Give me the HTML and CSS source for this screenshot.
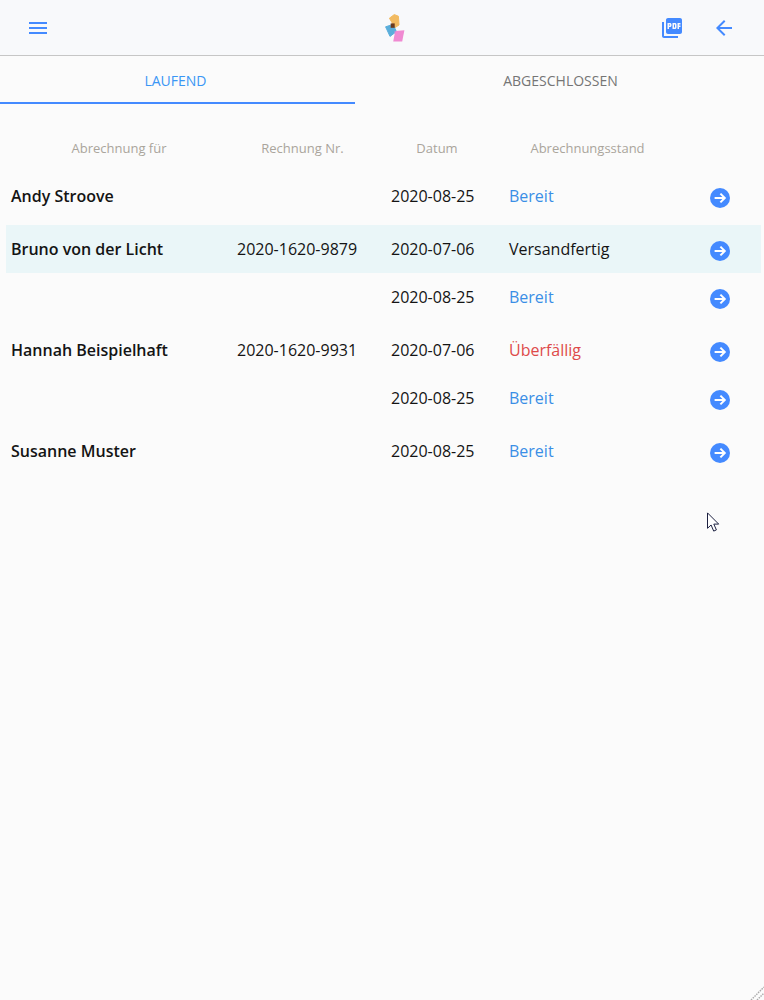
FILE: index.html
```html
<!DOCTYPE html>
<html lang="de">
<head>
  <meta charset="UTF-8" />
  <meta name="viewport" content="width=device-width, initial-scale=1" />
  <title>Abrechnungen</title>
  <link rel="stylesheet" href="styles.css">
</head>
<body>

  <header class="topbar">
    <div class="topbar-side">
      <svg class="icon" viewBox="0 0 24 24"><path d="M3 18h18v-2H3v2zm0-5h18v-2H3v2zm0-7v2h18V6H3z"/></svg>
    </div>
    <svg class="logo" viewBox="0 0 20 28" width="20" height="28">
      <polygon class="logo-o" points="9.3,0.6 13.4,2.2 14,11 10,13.6 4.4,4.2" />
      <polygon class="logo-b" points="0.6,12.8 8,10.4 11.4,17.6 5,22.4" />
      <polygon class="logo-p" points="10.2,17 19.4,16.2 17.2,27.4 8.2,27.4" />
      <polygon points="9.6,16.8 11.2,17.6 9,19.4" fill="#a69be0"/>
      <rect x="5.7" y="9.4" width="4" height="4.4" fill="#6b3a1e"/>
    </svg>
    <div class="topbar-side topbar-right">
      <svg class="icon" viewBox="0 0 24 24"><path d="M20 2H8c-1.1 0-2 .9-2 2v12c0 1.1.9 2 2 2h12c1.1 0 2-.9 2-2V4c0-1.1-.9-2-2-2zm-8.5 7.5c0 .83-.67 1.5-1.5 1.5H9v2H7.5V7H10c.83 0 1.5.67 1.5 1.5v1zm5 2c0 .83-.67 1.5-1.5 1.5h-2.5V7H15c.83 0 1.5.67 1.5 1.5v3zm4-3H19v1h1.5V11H19v2h-1.5V7h3v1.5zM9 9.5h1v-1H9v1zM4 6H2v14c0 1.1.9 2 2 2h14v-2H4V6zm10 5.5h1v-3h-1v3z"/></svg>
      <svg class="icon" viewBox="0 0 24 24"><path d="M20 11H7.83l5.59-5.59L12 4l-8 8 8 8 1.41-1.41L7.83 13H20v-2z"/></svg>
    </div>
  </header>

  <nav class="tabs">
    <div class="tab active">LAUFEND</div>
    <div class="tab">ABGESCHLOSSEN</div>
  </nav>

  <main class="liste">
    <div class="kopf">
      <div class="k1">Abrechnung für</div>
      <div class="k2">Rechnung Nr.</div>
      <div class="k3">Datum</div>
      <div class="k4">Abrechnungsstand</div>
    </div>

    <div class="gruppe">
      <div class="zeile">
        <div class="name">Andy Stroove</div>
        <div></div>
        <div>2020-08-25</div>
        <div class="bereit">Bereit</div>
        <svg class="pfeil" viewBox="0 0 20 20"><circle cx="10" cy="10" r="10"/><path d="M4.6 10h10M10.4 5.6l4.4 4.4-4.4 4.4"/></svg>
      </div>
    </div>

    <div class="gruppe">
      <div class="zeile markiert">
        <div class="name">Bruno von der Licht</div>
        <div>2020-1620-9879</div>
        <div>2020-07-06</div>
        <div>Versandfertig</div>
        <svg class="pfeil" viewBox="0 0 20 20"><circle cx="10" cy="10" r="10"/><path d="M4.6 10h10M10.4 5.6l4.4 4.4-4.4 4.4"/></svg>
      </div>
      <div class="zeile">
        <div></div>
        <div></div>
        <div>2020-08-25</div>
        <div class="bereit">Bereit</div>
        <svg class="pfeil" viewBox="0 0 20 20"><circle cx="10" cy="10" r="10"/><path d="M4.6 10h10M10.4 5.6l4.4 4.4-4.4 4.4"/></svg>
      </div>
    </div>

    <div class="gruppe">
      <div class="zeile">
        <div class="name">Hannah Beispielhaft</div>
        <div>2020-1620-9931</div>
        <div>2020-07-06</div>
        <div class="ueberfaellig">Überfällig</div>
        <svg class="pfeil" viewBox="0 0 20 20"><circle cx="10" cy="10" r="10"/><path d="M4.6 10h10M10.4 5.6l4.4 4.4-4.4 4.4"/></svg>
      </div>
      <div class="zeile">
        <div></div>
        <div></div>
        <div>2020-08-25</div>
        <div class="bereit">Bereit</div>
        <svg class="pfeil" viewBox="0 0 20 20"><circle cx="10" cy="10" r="10"/><path d="M4.6 10h10M10.4 5.6l4.4 4.4-4.4 4.4"/></svg>
      </div>
    </div>

    <div class="gruppe">
      <div class="zeile">
        <div class="name">Susanne Muster</div>
        <div></div>
        <div>2020-08-25</div>
        <div class="bereit">Bereit</div>
        <svg class="pfeil" viewBox="0 0 20 20"><circle cx="10" cy="10" r="10"/><path d="M4.6 10h10M10.4 5.6l4.4 4.4-4.4 4.4"/></svg>
      </div>
    </div>
  </main>

  <svg class="zeiger" viewBox="0 0 14 20" width="14" height="20">
    <path d="M1.5.9v15.4l3.6-3.3 2.6 6.1 2.7-1.2-2.6-5.8h4.9z"/>
  </svg>
  <svg class="griff" viewBox="0 0 14 14" width="14" height="14">
    <path d="M1 14L14 1M7 14l7-7"/>
  </svg>

</body>
</html>
```

FILE: styles.css
```css
* {
  box-sizing: border-box;
}
html, body {
  height: 100%;
}
body {
  font-family: 'Open Sans', sans-serif;
  font-size: 16px;
  background: #fbfbfb;
  margin: 0;
  color: #141414;
  overflow: hidden;
  position: relative;
}
.topbar {
  height: 56px;
  display: flex;
  align-items: center;
  padding: 0 28px 0 26px;
  background: #f8f9fb;
  border-bottom: 1px solid #c6c6c6;
}
.topbar-side {
  flex: 1;
  display: flex;
  align-items: center;
  gap: 28px;
}
.topbar-right {
  justify-content: flex-end;
}
.icon {
  width: 24px;
  height: 24px;
  fill: #448aff;
  display: block;
}
.logo {
  margin-left: 28px;
}
.logo-o {
  fill: #f2bb62;
  stroke: #f2bb62;
  stroke-linejoin: round;
}
.logo-b {
  fill: #5aaedb;
  stroke: #5aaedb;
  stroke-linejoin: round;
}
.logo-p {
  fill: #f08ad2;
}
.tabs {
  display: flex;
  height: 48px;
}
.tab {
  width: 409px;
  display: flex;
  align-items: center;
  justify-content: center;
  font-size: 14px;
  color: #757575;
  padding: 2px 0 0 2px;
  border-bottom: 2px solid transparent;
}
.tab.active {
  width: 355px;
  padding: 2px 4px 0 0;
  color: #3a96f5;
  border-bottom-color: #448aff;
}
.liste {
  padding: 32px 3px 0 6px;
}
.kopf, .zeile {
  display: grid;
  grid-template-columns: 226px 154px 118px 196px 1fr;
  align-items: center;
}
.kopf {
  height: 24px;
  margin-bottom: 12px;
  font-size: 13px;
  color: #aaa59c;
  text-align: center;
}
.k2 {
  padding-right: 13px;
}
.k3 {
  padding-right: 16px;
}
.k4 {
  padding-right: 29px;
}
.gruppe {
  margin-bottom: 5px;
}
.zeile {
  height: 48px;
}
.zeile > div {
  padding-left: 5px;
}
.markiert {
  background: #eaf6f8;
}
.name {
  font-weight: 600;
}
.bereit {
  color: #3a8ee6;
}
.ueberfaellig {
  color: #de4a4a;
}
.pfeil {
  width: 20px;
  height: 20px;
  margin: 4px 0 0 10px;
}
.pfeil circle {
  fill: #448aff;
}
.pfeil path {
  fill: none;
  stroke: #fff;
  stroke-width: 2;
}
.zeiger {
  position: absolute;
  left: 706px;
  top: 512px;
}
.zeiger path {
  fill: #fff;
  stroke: #1c2040;
  stroke-width: 1;
}
.griff {
  position: absolute;
  right: 0;
  bottom: 0;
}
.griff path {
  fill: none;
  stroke: #a9a9a9;
  stroke-width: 1.4;
  stroke-dasharray: 1.5 1;
}
```
